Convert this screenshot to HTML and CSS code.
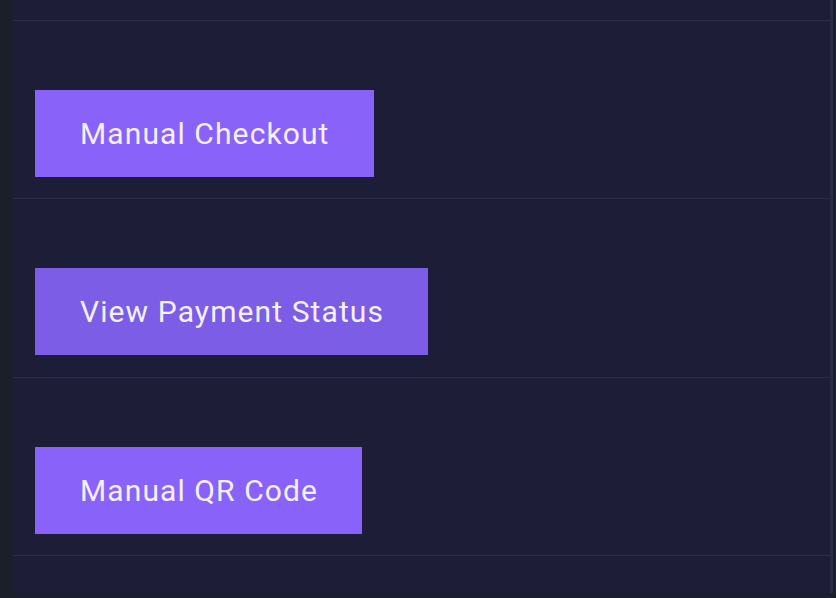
FILE: index.html
```html
<!DOCTYPE html>
<html>
<head>
<meta charset="utf-8">
<link rel="stylesheet" href="styles.css">
</head>
<body>
<div class="panel">
  <div class="row row-top"></div>
  <div class="row"><button class="btn">Manual Checkout</button></div>
  <div class="row"><button class="btn btn-hover">View Payment Status</button></div>
  <div class="row"><button class="btn">Manual QR Code</button></div>
</div>
</body>
</html>
```
FILE: styles.css
```css
html, body {
  margin: 0;
  padding: 0;
  height: 100%;
  background: #1b1f2a;
  overflow: hidden;
}
body {
  font-family: Roboto, "Liberation Sans", sans-serif;
}
.panel {
  margin-left: 13px;
  width: 817px;
  height: 593px;
  background: #1e1d38;
  border-right: 3px solid #2b2a47;
  overflow: hidden;
}
.row {
  border-bottom: 1px solid #2d2c4a;
  height: 177.4px;
  box-sizing: content-box;
  padding-left: 22px;
  display: flex;
  align-items: flex-start;
}
.row-top {
  height: 20px;
}
.btn {
  margin-top: 69px;
  height: 87px;
  padding: 0 44px 0 45px;
  border: none;
  border-radius: 0;
  background: #8962fa;
  color: #f5f0ff;
  font-family: Roboto, "Liberation Sans", sans-serif;
  font-size: 30px;
  letter-spacing: 1.1px;
  cursor: pointer;
}
.btn-hover {
  background: #7b5de6;
}
```
